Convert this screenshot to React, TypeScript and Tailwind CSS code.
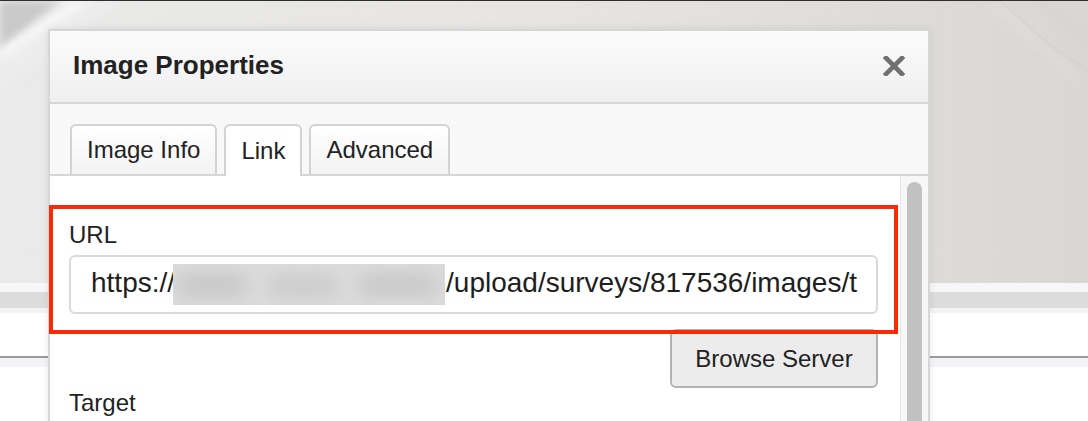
import React from "react";

function CloseIcon() {
  return (
    <svg width="22" height="20" viewBox="0 0 22 20" aria-hidden="true">
      <path d="M3 2 L19 18 M19 2 L3 18" stroke="#707070" strokeWidth="4.6" strokeLinecap="square" />
    </svg>
  );
}

function Tab({ label, active }: { label: string; active?: boolean }) {
  return active ? (
    <div className="h-[52px] -mb-[2px] px-[15px] flex items-center border-2 border-b-0 border-[#d3d3d3] rounded-t-[6px] bg-white text-[24px] text-[#222]">
      {label}
    </div>
  ) : (
    <div className="h-[50px] px-[15px] flex items-center border-2 border-b-0 border-[#d3d3d3] rounded-t-[6px] bg-gradient-to-b from-white to-[#f3f3f3] text-[24px] text-[#222]">
      {label}
    </div>
  );
}

function Blurred() {
  return (
    <span className="relative inline-block align-middle w-[272px] h-[41px] -ml-[2px] mr-[1px] overflow-hidden bg-[#dbdbdb]">
      <span className="absolute left-[4px] top-[9px] w-[70px] h-[24px] rounded-full bg-[#c9c9c9] blur-[8px]" />
      <span className="absolute left-[95px] top-[11px] w-[70px] h-[22px] rounded-full bg-[#cccccc] blur-[8px]" />
      <span className="absolute left-[185px] top-[9px] w-[80px] h-[24px] rounded-full bg-[#cacaca] blur-[8px]" />
    </span>
  );
}

export default function App() {
  return (
    <div className="relative w-[1088px] h-[421px] overflow-hidden bg-white font-['Liberation_Sans',Arial,sans-serif]">
      {/* page behind the dialog */}
      <div className="flex flex-col h-full">
        <div className="h-px shrink-0 bg-[#2e2e2e]" />
        <div className="relative h-[282px] shrink-0 bg-gradient-to-r from-[#eaeaea] via-[#e6e5e2] to-[#d9d7d3]">
          <svg className="absolute inset-0" width="1088" height="282" aria-hidden="true">
            <defs>
              <filter id="bl" x="-20%" y="-20%" width="140%" height="140%">
                <feGaussianBlur stdDeviation="4" />
              </filter>
            </defs>
            <polygon points="0,0 60,0 0,50" fill="#c9c9c9" filter="url(#bl)" />
            <polygon points="0,48 72,0 95,0 0,62" fill="#f7f7f7" filter="url(#bl)" />
            <polygon points="0,60 95,0 120,0 0,90" fill="#eeeeee" opacity="0.7" filter="url(#bl)" />
            <path d="M992 2 L1035 40 L1078 80" stroke="#ecebe8" strokeWidth="3" fill="none" opacity="0.6" filter="url(#bl)" />
            <path d="M1000 0 L1050 44 L1088 70" stroke="#cdcbc7" strokeWidth="2" fill="none" opacity="0.35" />
            <path d="M1040 0 L1088 40" stroke="#cfcdc9" strokeWidth="6" fill="none" opacity="0.4" filter="url(#bl)" />
          </svg>
        </div>
        <div className="h-[9px] shrink-0 bg-[#f7f7f9]" />
        <div className="h-[16px] shrink-0 bg-[#dcdcdc]" />
        <div className="h-[5px] shrink-0 bg-[#f3f3f5]" />
        <div className="h-[43px] shrink-0 bg-white" />
        <div className="h-[2px] shrink-0 bg-[#999999]" />
        <div className="h-[9px] shrink-0 bg-[#f4f4f8]" />
        <div className="flex-1 bg-white" />
      </div>

      {/* dialog */}
      <div className="absolute left-[48px] top-[29px] w-[882px] h-[440px] flex flex-col border-2 border-[#d6d6d6] bg-white shadow-[0_0_8px_rgba(0,0,0,0.08)]">
        <div className="h-[73px] shrink-0 flex items-center justify-between pl-[23px] pr-[23px] pb-[2px] border-b-2 border-[#d6d6d6] bg-gradient-to-b from-[#fbfbfb] to-[#efefef]">
          <span className="text-[26px] font-bold text-[#222]">Image Properties</span>
          <CloseIcon />
        </div>
        <div className="h-[72px] shrink-0 flex items-end gap-[7px] pl-[20px] border-b-2 border-[#d6d6d6] bg-[#f8f8f8]">
          <Tab label="Image Info" />
          <Tab label="Link" active />
          <Tab label="Advanced" />
        </div>
        <div className="flex-1 min-h-0 flex bg-white">
          <div className="flex-1 min-w-0 flex flex-col pl-[19px] pr-[22px] pt-[45px] text-[#222]">
            <div className="text-[24px] leading-[28px]">URL</div>
            <div className="mt-[6px] h-[59px] shrink-0 flex items-center border-2 border-[#dadada] rounded-[6px] pl-[20px] pr-[14px] bg-white">
              <div className="flex-1 min-w-0 overflow-hidden whitespace-nowrap text-[28px] leading-[34px] text-[#1e1e1e]">
                https://<Blurred />/upload/surveys/817536/images/t
              </div>
            </div>
            <div className="mt-[15px] shrink-0 flex justify-end">
              <div className="h-[59px] w-[208px] flex items-center justify-center border-2 border-[#b2b2b2] rounded-[6px] bg-[#ececec] text-[24px] text-[#222]">
                Browse Server
              </div>
            </div>
            <div className="mt-[1px] text-[24px] leading-[28px]">Target</div>
          </div>
          <div className="w-[28px] shrink-0 border-l border-[#e6e6e6] bg-[#f7f7f7] pt-[6px] pl-[6px]">
            <div className="w-[15px] h-[300px] rounded-full bg-[#c1c1c1]" />
          </div>
        </div>
      </div>

      {/* red highlight annotation */}
      <div className="absolute left-[49px] top-[205px] w-[849px] h-[129px] border-4 border-[#fb2a06]" />
    </div>
  );
}
